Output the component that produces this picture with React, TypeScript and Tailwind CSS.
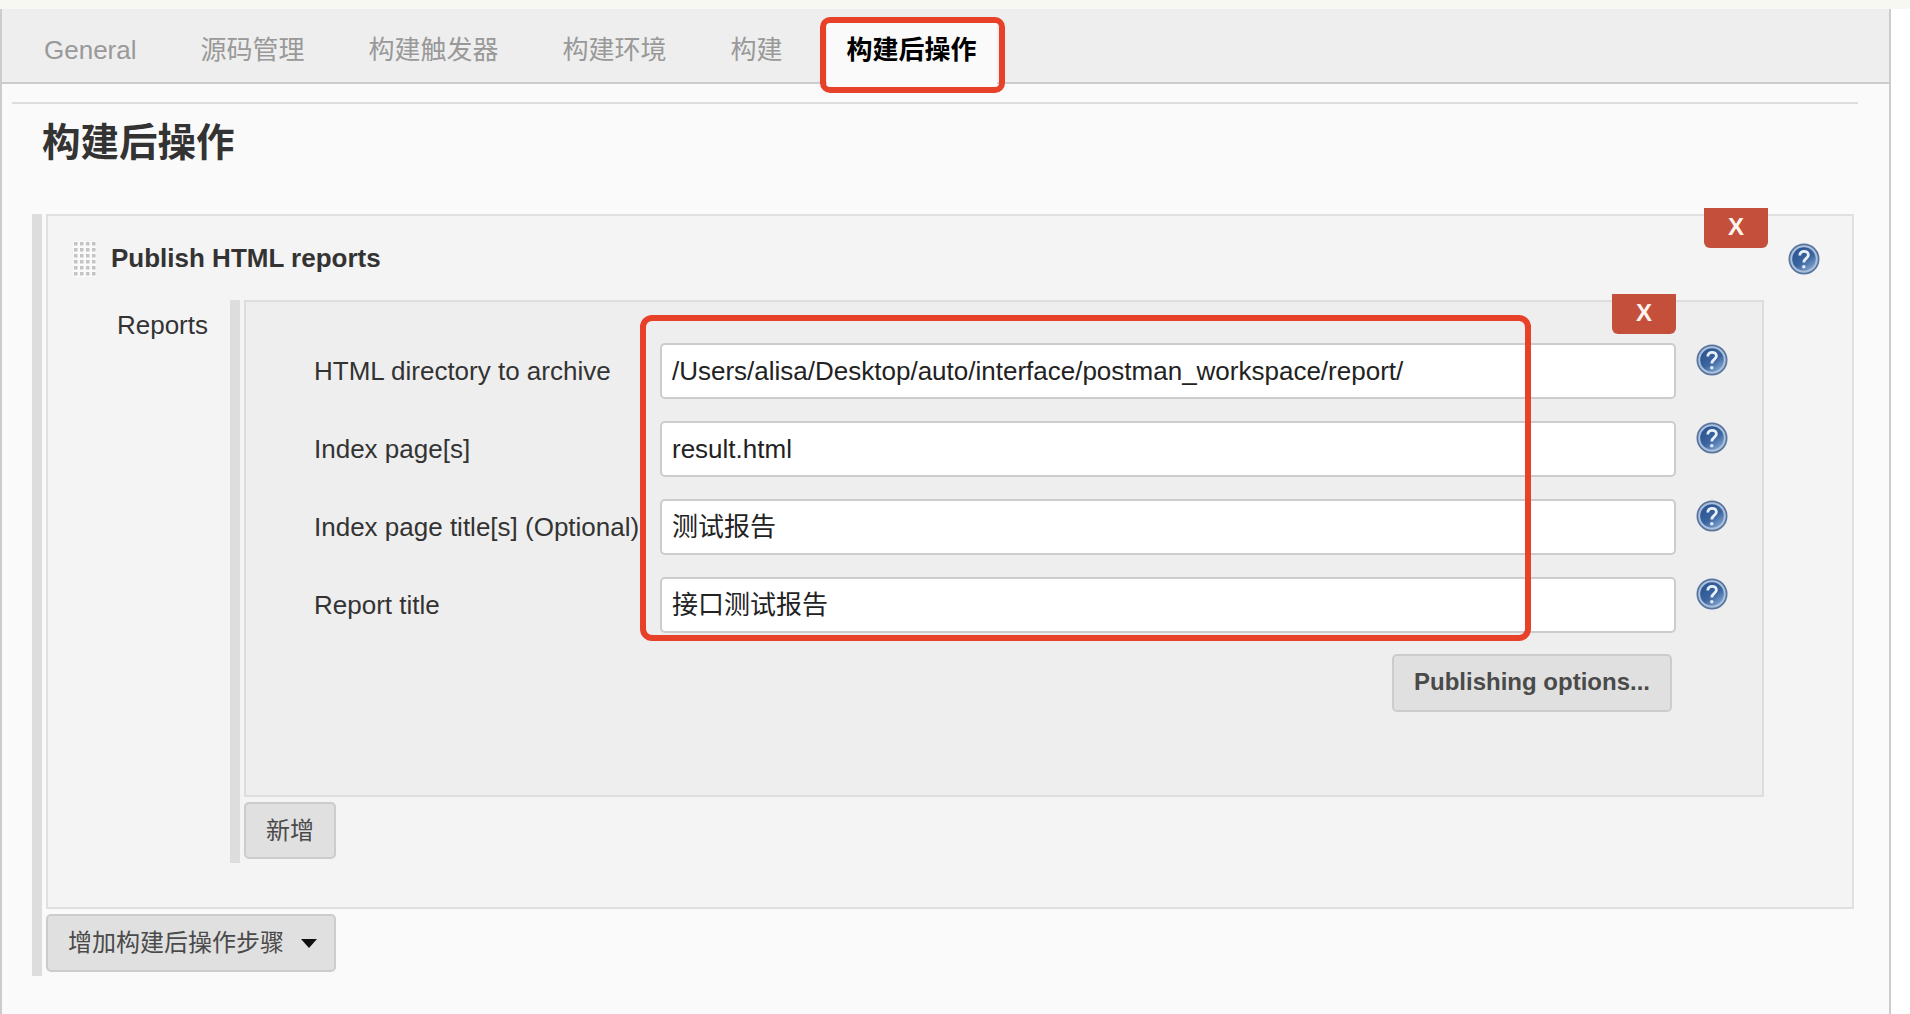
const font = "font-['Liberation_Sans','Noto_Sans_CJK_SC',sans-serif]";

function HelpIcon({ className = "" }: { className?: string }) {
    return (
        <svg viewBox="0 0 32 32" className={`h-8 w-8 shrink-0 ${className}`}>
            <defs>
                <linearGradient id="help-blue" x1="0.2" y1="0.1" x2="0.8" y2="0.95">
                    <stop offset="0%" stopColor="#2c5694" />
                    <stop offset="55%" stopColor="#3a659f" />
                    <stop offset="100%" stopColor="#7fa3d0" />
                </linearGradient>
            </defs>
            <circle cx="16" cy="16" r="15.5" fill="#56749f" />
            <circle cx="16" cy="16" r="13.8" fill="#adc0da" />
            <circle cx="16" cy="16" r="11.8" fill="url(#help-blue)" />
            <path d="M11.8 12.4c0-5.4 8.6-5.4 8.6-.4 0 3.4-4.6 3.4-4.6 7.4" fill="none" stroke="#e9eff7" strokeWidth="2.8" />
            <circle cx="15.8" cy="23.8" r="1.8" fill="#dfe8f3" />
        </svg>
    );
}

function DragHandle() {
    const cols = [0, 1, 2, 3];
    const rows = [0, 1, 2, 3, 4, 5];
    return (
        <svg viewBox="0 0 23 36" className="h-9 w-[23px] shrink-0">
            <rect width="23" height="36" fill="#fafafa" />
            {rows.map((r) =>
                cols.map((c) => <rect key={`${r}-${c}`} x={1 + c * 6} y={1 + r * 6} width="3.5" height="3.5" fill="#c4c4c4" />)
            )}
        </svg>
    );
}

function RemoveButton({ className }: { className: string }) {
    return (
        <div className={`absolute flex h-10 w-16 items-center justify-center rounded-b-md bg-[#c4503c] pb-0.5 text-2xl font-bold text-[#fdf3ef] ${className}`}>
            X
        </div>
    );
}

const fields = [
    { label: "HTML directory to archive", value: "/Users/alisa/Desktop/auto/interface/postman_workspace/report/" },
    { label: "Index page[s]", value: "result.html" },
    { label: "Index page title[s] (Optional)", value: "测试报告" },
    { label: "Report title", value: "接口测试报告" },
];

const tabs = ["General", "源码管理", "构建触发器", "构建环境", "构建"];

export default function App() {
    return (
        <div className={`relative flex h-[1014px] w-[1910px] flex-col overflow-hidden bg-white text-[26px] text-[#333333] ${font}`}>
            <div className="h-[9px] bg-[#f8f8f2]" />

            <div className="w-[1891px] flex-1 border-x-2 border-[#cccccc] bg-[#fafafa]">
                {/* Tabs */}
                <div className="flex h-[75px] items-center gap-[64px] border-b-2 border-[#cccccc] bg-[#eeeeee] pl-[42px] pt-[9px]">
                    {tabs.map((tab) => (
                        <span key={tab} className="text-[#999999]">{tab}</span>
                    ))}
                    <div className="relative">
                        <div className="absolute -inset-x-[20px] top-[-8px] h-[63px] bg-[#fafafa]" />
                        <span className="relative font-bold text-black">构建后操作</span>
                    </div>
                </div>

                <div className="ml-[10px] mr-[31px] mt-[18px] h-0.5 bg-[#dddddd]" />

                <h1 className="ml-[40px] mb-[48px] mt-[16px] text-[38.5px] font-bold leading-[46px] text-[#333333]">构建后操作</h1>

                {/* Post-build section */}
                <div className="ml-[30px] border-l-[10px] border-[#dddddd] pb-1 pl-1">
                    <div className="relative w-[1808px] border-2 border-[#e0e0e0] bg-[#f4f4f4] pb-[44px] pl-[25px] pr-[32px] pt-[25px]">
                        <RemoveButton className="right-[84px] top-[-8px]" />
                        <div className="flex h-9 items-center gap-[15px]">
                            <DragHandle />
                            <span className="-mt-0.5 font-bold">Publish HTML reports</span>
                            <HelpIcon className="ml-auto" />
                        </div>
                        <div className="mt-[23px] flex">
                            <div className="w-[135px] pt-[10px] text-right leading-[30px]">Reports</div>
                            <div className="ml-[22px] border-l-[10px] border-[#dddddd] pb-1 pl-[4px]">
                                <div className="relative h-[497px] w-[1520px] border-2 border-[#dddddd] bg-[#eeeeee] pl-[68px] pt-[41px]">
                                    <RemoveButton className="right-[86px] top-[-8px]" />
                                    <div className="flex flex-col gap-[22px]">
                                        {fields.map((field) => (
                                            <div key={field.label} className="flex">
                                                <div className="flex h-14 w-[346px] items-center">{field.label}</div>
                                                <div className="flex h-14 w-[1016px] items-center rounded-[5px] border-2 border-[#cccccc] bg-white pl-[10px] text-[#222222]">
                                                    {field.value}
                                                </div>
                                                <HelpIcon className="ml-[20px] mt-px" />
                                            </div>
                                        ))}
                                    </div>
                                    <div className="ml-[1078px] mt-[21px] flex h-[58px] w-[280px] items-center justify-center rounded-[5px] border-2 border-[#cccccc] bg-[#e0e0e0] pb-0.5 text-2xl font-bold text-[#4a4a4a]">
                                        Publishing options...
                                    </div>
                                </div>
                                <div className="mt-[5px] flex h-[57px] w-[92px] items-center justify-center rounded-[5px] border-2 border-[#cccccc] bg-[#e0e0e0] text-2xl text-[#4a4a4a]">
                                    新增
                                </div>
                            </div>
                        </div>
                    </div>
                    <div className="mt-[5px] flex h-[58px] w-[290px] items-center gap-[17px] rounded-[5px] border-2 border-[#cccccc] bg-[#e0e0e0] pl-[20px] text-2xl text-[#4a4a4a]">
                        增加构建后操作步骤
                        <svg viewBox="0 0 16 9" className="h-[9px] w-4">
                            <path d="M0 0h16L8 9z" fill="#111111" />
                        </svg>
                    </div>
                </div>
            </div>

            {/* Red annotation boxes */}
            <div className="absolute left-[820px] top-[17px] h-[76px] w-[185px] rounded-[10px] border-[6px] border-[#e8412a]" />
            <div className="absolute left-[640px] top-[315px] h-[326px] w-[891px] rounded-xl border-[6px] border-[#e8412a]" />
        </div>
    );
}
